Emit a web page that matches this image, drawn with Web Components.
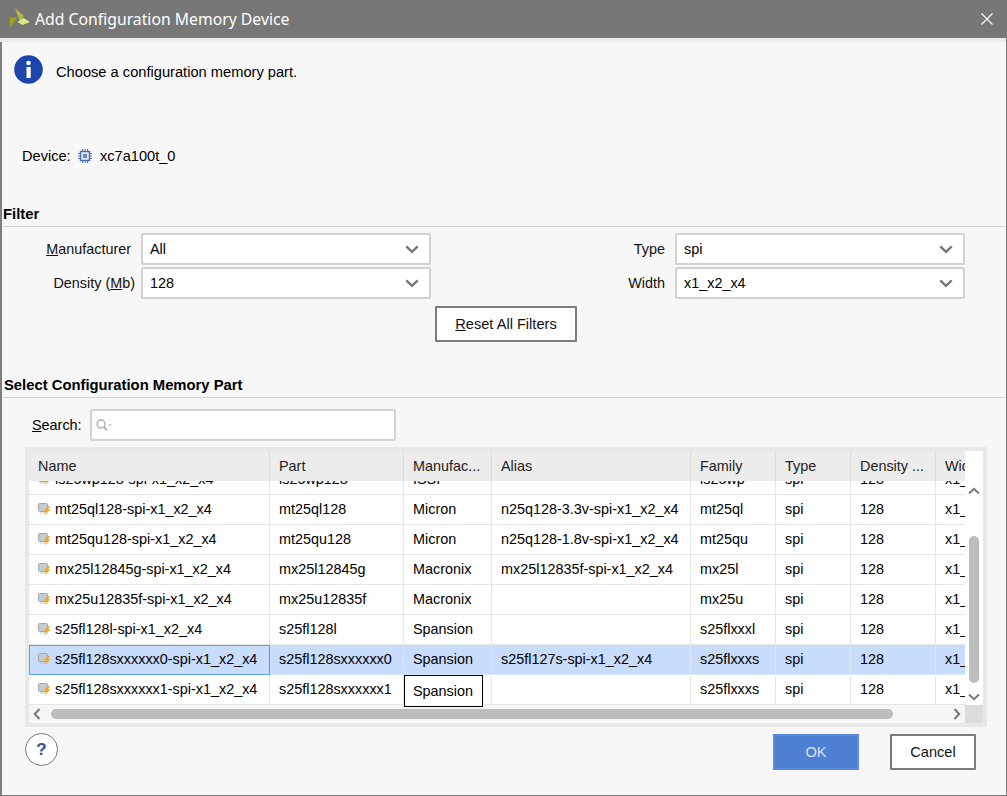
<!DOCTYPE html>
<html>
<head>
<meta charset="utf-8">
<title>Add Configuration Memory Device</title>
<style>
  html, body { margin: 0; padding: 0; background: #f7f7f7; }
  body { font: 14.4px "Liberation Sans", Arial, sans-serif; color: #000; }
</style>
</head>
<body>
<config-dialog>
  <title-bar slot="top">Add Configuration Memory Device</title-bar>
  <info-row>Choose a configuration memory part.</info-row>
  <device-row name="xc7a100t_0"></device-row>

  <section-head style="margin-top:40px">Filter</section-head>
  <filter-form>
    <combo-field value="All" style="--label-pad:10px"><u>M</u>anufacturer</combo-field>
    <combo-field value="spi" style="--label-w:244px;--label-pad:10px">Type</combo-field>
    <combo-field value="128" style="--label-pad:6px">Density (<u>M</u>b)</combo-field>
    <combo-field value="x1_x2_x4" style="--label-w:244px;--label-pad:10px">Width</combo-field>
  </filter-form>
  <reset-row><push-button style="--w:142px"><u>R</u>eset All Filters</push-button></reset-row>

  <section-head style="margin-top:35px;--left:1px">Select Configuration Memory Part</section-head>
  <search-row><u>S</u>earch:</search-row>
  <parts-table></parts-table>

  <dialog-footer>
    <push-button slot="end" variant="primary" style="--w:86px">OK</push-button>
    <push-button slot="end" style="--w:86px">Cancel</push-button>
  </dialog-footer>
</config-dialog>

<script>
function shadow(el, html) {
  const template = document.createElement('template')
  template.innerHTML = html
  el.attachShadow({ mode: 'open' }).appendChild(template.content.cloneNode(true))
  return el.shadowRoot
}

class ConfigDialog extends HTMLElement {
  constructor() {
    super()
    shadow(this, `
      <style>
        :host {
          display: flex;
          flex-direction: column;
          box-sizing: border-box;
          width: 1007px;
          height: 796px;
          background: #f7f7f7;
          border-right: 1px solid #7a7a7a;
          border-bottom: 1px solid #7a7a7a;
          overflow: hidden;
        }
        .main {
          display: flex;
          flex-direction: column;
          flex: 1;
          border-left: 2px solid #7f7f7f;
        }
      </style>
      <slot name="top"></slot>
      <div class="main"><slot></slot></div>
    `)
  }
}
customElements.define('config-dialog', ConfigDialog)

class TitleBar extends HTMLElement {
  constructor() {
    super()
    shadow(this, `
      <style>
        :host {
          display: flex;
          align-items: center;
          box-sizing: border-box;
          height: 42px;
          margin-right: -1px;
          background: #777;
          border-bottom: 4px solid #ececec;
          color: #fff;
          font: 15.75px "Noto Sans", "Open Sans", sans-serif;
          padding-left: 9px;
        }
        svg { flex: none; margin-right: 4px; }
        .text { flex: 1; }
        .close { margin: 0 14px 0 0; }
      </style>
      <svg width="22" height="22" viewBox="0 0 22 22">
        <path d="M1 9.500 8.300 9.500 1 19.500Z" fill="#9ea31c"/>
        <path d="M6 0.500 14.800 8 11 13.500Z" fill="#b9bb3c"/>
        <path d="M8.500 14 14.500 10 21 14 13.500 17Z" fill="#e4e58a"/>
      </svg>
      <span class="text"><slot></slot></span>
      <svg class="close" width="12" height="12" viewBox="0 0 12 12">
        <path d="M0.500 0.500 11.500 11.500M11.500 0.500 0.500 11.500" stroke="#fff" stroke-width="1.100" fill="none"/>
      </svg>
    `)
  }
}
customElements.define('title-bar', TitleBar)

class InfoRow extends HTMLElement {
  constructor() {
    super()
    shadow(this, `
      <style>
        :host {
          display: flex;
          align-items: center;
          gap: 13px;
          height: 29px;
          margin-top: 13px;
          padding-left: 12px;
          font-size: 14.67px;
        }
        span { position: relative; top: 2px; }
      </style>
      <svg width="29" height="29" viewBox="0 0 29 29">
        <circle cx="14.500" cy="14.500" r="14.300" fill="#1f45ad"/>
        <circle cx="14.500" cy="8" r="2.300" fill="#fff"/>
        <rect x="12.500" y="12" width="4.200" height="11" fill="#fff"/>
      </svg>
      <span><slot></slot></span>
    `)
  }
}
customElements.define('info-row', InfoRow)

class DeviceRow extends HTMLElement {
  constructor() {
    super()
    shadow(this, `
      <style>
        :host {
          display: flex;
          align-items: center;
          height: 20px;
          margin-top: 62px;
          padding-left: 20px;
          font-size: 14.6px;
        }
        .label { width: 56px; }
        svg { margin-right: 8px; }
      </style>
      <span class="label">Device:</span>
      <svg width="14" height="14" viewBox="0 0 14 14">
        <rect x="2.500" y="2.500" width="9" height="9" fill="#dfe5f0" stroke="#4c6ea6" stroke-width="1.400"/>
        <rect x="5" y="5" width="4" height="4" fill="#6d88b5"/>
        <path d="M4.500 0V2M7 0V2M9.500 0V2M4.500 12V14M7 12V14M9.500 12V14M0 4.500H2M0 7H2M0 9.500H2M12 4.500H14M12 7H14M12 9.500H14" stroke="#5d7cae" stroke-width="1.200"/>
      </svg>
      <span>${this.getAttribute('name')}</span>
    `)
  }
}
customElements.define('device-row', DeviceRow)

class SectionHead extends HTMLElement {
  constructor() {
    super()
    shadow(this, `
      <style>
        :host {
          display: block;
          box-sizing: border-box;
          height: 21px;
          margin-left: 1px;
          margin-right: 1px;
          padding-left: var(--left, 0);
          border-bottom: 1px solid #d4d4d4;
          font-weight: bold;
          font-size: 14.8px;
          line-height: 16px;
        }
      </style>
      <slot></slot>
    `)
  }
}
customElements.define('section-head', SectionHead)

class FilterForm extends HTMLElement {
  constructor() {
    super()
    shadow(this, `
      <style>
        :host {
          display: grid;
          grid-template-columns: 429px 534px;
          row-gap: 2px;
          margin-top: 6px;
        }
      </style>
      <slot></slot>
    `)
  }
}
customElements.define('filter-form', FilterForm)

class ComboField extends HTMLElement {
  constructor() {
    super()
    shadow(this, `
      <style>
        :host {
          display: grid;
          grid-template-columns: var(--label-w, 139px) 290px;
          align-items: center;
        }
        label {
          text-align: right;
          padding-right: var(--label-pad, 6px);
          color: #111;
        }
        .box {
          display: flex;
          align-items: center;
          justify-content: space-between;
          box-sizing: border-box;
          height: 32px;
          padding: 0 10px 0 7px;
          background: #fff;
          border: 2px solid #d2d2d2;
          border-radius: 2px;
        }
      </style>
      <label><slot></slot></label>
      <div class="box">
        <span>${this.getAttribute('value')}</span>
        <svg width="14" height="9" viewBox="0 0 14 9">
          <path d="M1.300 1.300 7 6.800 12.700 1.300" fill="none" stroke="#777" stroke-width="2.400"/>
        </svg>
      </div>
    `)
  }
}
customElements.define('combo-field', ComboField)

class ResetRow extends HTMLElement {
  constructor() {
    super()
    shadow(this, `
      <style>
        :host { display: flex; margin-top: 7px; padding-left: 433px; }
      </style>
      <slot></slot>
    `)
  }
}
customElements.define('reset-row', ResetRow)

class PushButton extends HTMLElement {
  constructor() {
    super()
    shadow(this, `
      <style>
        :host {
          display: flex;
          align-items: center;
          justify-content: center;
          box-sizing: border-box;
          width: var(--w, 86px);
          height: 36px;
          background: #fff;
          border: 2px solid #7c7c7c;
          border-radius: 1px;
          color: #111;
          font-size: 14.6px;
        }
        :host([variant="primary"]) {
          background: #4f7fd3;
          border-color: #5b8ade;
          color: #d7e2f6;
        }
      </style>
      <slot></slot>
    `)
  }
}
customElements.define('push-button', PushButton)

class SearchRow extends HTMLElement {
  constructor() {
    super()
    shadow(this, `
      <style>
        :host {
          display: flex;
          align-items: center;
          height: 32px;
          margin-top: 11px;
          padding-left: 30px;
        }
        .label { width: 58px; }
        .input {
          display: flex;
          align-items: center;
          box-sizing: border-box;
          width: 306px;
          height: 32px;
          padding-left: 3px;
          background: #fff;
          border: 2px solid #d2d2d2;
          border-radius: 2px;
        }
      </style>
      <span class="label"><slot></slot></span>
      <div class="input">
        <svg width="18" height="14" viewBox="0 0 18 14">
          <circle cx="6" cy="6" r="4" fill="none" stroke="#a8a8a8" stroke-width="1.300"/>
          <path d="M9 9 12 12.500" stroke="#a8a8a8" stroke-width="1.800"/>
          <path d="M13.500 6.500H16.500L15 8.500Z" fill="#a8a8a8"/>
        </svg>
      </div>
    `)
  }
}
customElements.define('search-row', SearchRow)

const COLS = '241px 134px 88px 199px 85px 75px 85px 29px'
const HEADERS = ['Name', 'Part', 'Manufac...', 'Alias', 'Family', 'Type', 'Density ...', 'Width']
const PARTS = [
  ['is25wp128-spi-x1_x2_x4', 'is25wp128', 'ISSI', '', 'is25wp'],
  ['mt25ql128-spi-x1_x2_x4', 'mt25ql128', 'Micron', 'n25q128-3.3v-spi-x1_x2_x4', 'mt25ql'],
  ['mt25qu128-spi-x1_x2_x4', 'mt25qu128', 'Micron', 'n25q128-1.8v-spi-x1_x2_x4', 'mt25qu'],
  ['mx25l12845g-spi-x1_x2_x4', 'mx25l12845g', 'Macronix', 'mx25l12835f-spi-x1_x2_x4', 'mx25l'],
  ['mx25u12835f-spi-x1_x2_x4', 'mx25u12835f', 'Macronix', '', 'mx25u'],
  ['s25fl128l-spi-x1_x2_x4', 's25fl128l', 'Spansion', '', 's25flxxxl'],
  ['s25fl128sxxxxxx0-spi-x1_x2_x4', 's25fl128sxxxxxx0', 'Spansion', 's25fl127s-spi-x1_x2_x4', 's25flxxxs'],
  ['s25fl128sxxxxxx1-spi-x1_x2_x4', 's25fl128sxxxxxx1', '', '', 's25flxxxs']
]
const PART_ICON = `
  <svg class="icon" width="13" height="13" viewBox="0 0 13 13">
    <rect x="0.500" y="0.500" width="9" height="8" rx="1" fill="#c2ccd4" stroke="#a6a6a6"/>
    <path d="M3 9V11M6 9V11" stroke="#b8b8b8"/>
    <path d="M9.800 3 6 7.500H8.300L6.800 12.500 12.500 6.200H10L12 3Z" fill="#f4a71d"/>
  </svg>`

class PartsTable extends HTMLElement {
  constructor() {
    super()
    const rows = PARTS.map((part, i) => {
      const cells = [...part, 'spi', '128', 'x1_x2_x4'].map((text, c) =>
        `<div class="cell${c === 0 ? ' name' : ''}">${c === 0 ? PART_ICON : ''}<span>${text}</span></div>`).join('')
      return `<div class="row${i === 6 ? ' selected' : ''}">${cells}</div>`
    }).join('')

    shadow(this, `
      <style>
        :host {
          display: block;
          box-sizing: border-box;
          width: 962px;
          height: 280px;
          margin: 6px 0 0 23px;
          padding: 4px;
          background: #e8e8e8;
        }
        .wrap {
          position: relative;
          display: grid;
          grid-template-columns: 936px 18px;
          grid-template-rows: 30px 224px 18px;
          height: 272px;
          background: #fff;
        }
        .row, .head {
          display: grid;
          grid-template-columns: ${COLS};
        }
        .head { background: #ececec; }
        .head .cell { height: 30px; padding-bottom: 0; border-bottom: 0; border-right-color: #dcdcdc; color: #222; }
        .body { overflow: hidden; background: #fff; }
        .rows { margin-top: -16px; }
        .row { height: 30px; }
        .cell {
          display: flex;
          align-items: center;
          box-sizing: border-box;
          height: 30px;
          padding: 0 0 2px 9px;
          overflow: hidden;
          white-space: nowrap;
          border-right: 1px solid #e6e6e6;
          border-bottom: 1px solid #e6e6e6;
        }
        .cell:last-child { border-right: 0; }
        .name .icon { flex: none; margin-right: 4px; margin-left: 0; position: relative; top: 1px; }
        .selected .cell { background: #c8dcfb; border-color: #dbe6f6; }
        .selected .name { outline: 1px solid #5c9fdc; outline-offset: -1px; }
        .vbar {
          position: relative;
          grid-column: 2;
          grid-row: 1 / 3;
          background: #fff;
        }
        .hbar {
          position: relative;
          grid-column: 1;
          grid-row: 3;
          background: #f6f6f6;
        }
        .corner { grid-column: 2; grid-row: 3; background: #dcdcdc; }
        .thumb { position: absolute; background: #bdbdbd; border-radius: 5px; }
        .vbar .thumb { left: 4px; top: 85px; width: 10px; height: 147px; }
        .hbar .thumb { left: 22px; top: 4px; width: 842px; height: 10px; }
        .arrow { position: absolute; }
        .editor {
          position: absolute;
          left: 375px;
          top: 224px;
          box-sizing: border-box;
          width: 79px;
          height: 32px;
          padding-left: 8px;
          display: flex;
          align-items: center;
          background: #fff;
          border: 1px solid #000;
        }
      </style>
      <div class="wrap">
        <div class="head">${HEADERS.map(h => `<div class="cell"><span>${h}</span></div>`).join('')}</div>
        <div class="body"><div class="rows">${rows}</div></div>
        <div class="vbar">
          <svg class="arrow" style="left:3px;top:36px" width="12" height="8" viewBox="0 0 12 8"><path d="M1 6.500 6 1.800 11 6.500" fill="none" stroke="#777" stroke-width="2"/></svg>
          <div class="thumb"></div>
          <svg class="arrow" style="left:3px;top:242px" width="12" height="8" viewBox="0 0 12 8"><path d="M1 1.500 6 6.200 11 1.500" fill="none" stroke="#777" stroke-width="2"/></svg>
        </div>
        <div class="hbar">
          <svg class="arrow" style="left:4px;top:3px" width="8" height="12" viewBox="0 0 8 12"><path d="M6.500 1 1.800 6 6.500 11" fill="none" stroke="#777" stroke-width="2"/></svg>
          <div class="thumb"></div>
          <svg class="arrow" style="left:924px;top:3px" width="8" height="12" viewBox="0 0 8 12"><path d="M1.500 1 6.200 6 1.500 11" fill="none" stroke="#777" stroke-width="2"/></svg>
        </div>
        <div class="corner"></div>
        <div class="editor">Spansion</div>
      </div>
    `)
  }
}
customElements.define('parts-table', PartsTable)

class DialogFooter extends HTMLElement {
  constructor() {
    super()
    shadow(this, `
      <style>
        :host {
          display: flex;
          justify-content: space-between;
          margin: 6px 30px 0 23px;
        }
        .help {
          display: flex;
          align-items: center;
          justify-content: center;
          box-sizing: border-box;
          width: 33px;
          height: 33px;
          background: #fff;
          border: 1px solid #777;
          border-radius: 50%;
          color: #34518f;
          font-weight: bold;
          font-size: 17px;
        }
        .end { display: flex; gap: 31px; margin-top: 1px; }
      </style>
      <div class="help">?</div>
      <div class="end"><slot name="end"></slot></div>
    `)
  }
}
customElements.define('dialog-footer', DialogFooter)
</script>
</body>
</html>
